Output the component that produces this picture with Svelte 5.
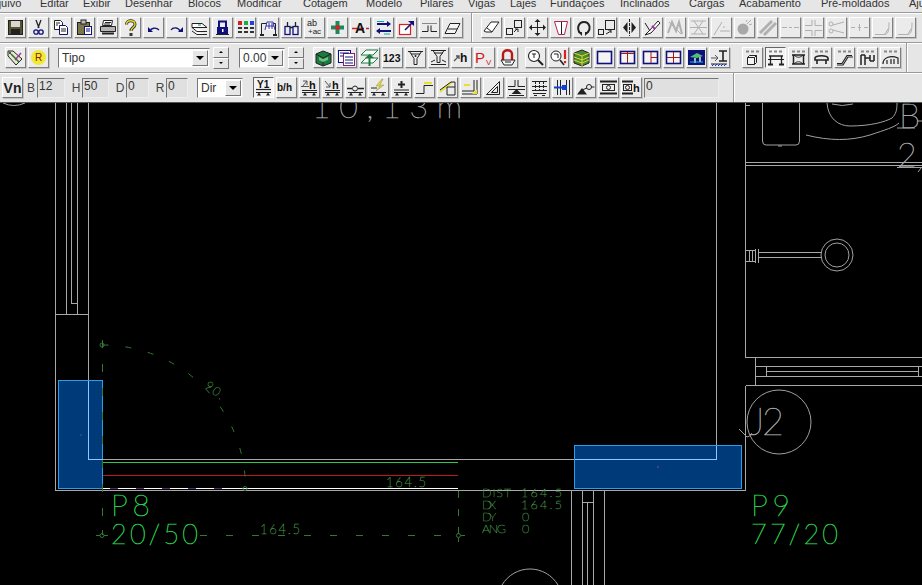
<script>
  const menu = [['Arquivo',56],['Editar',43],['Exibir',42],['Desenhar',63],['Blocos',49],['Modificar',66],['Cotagem',63],['Modelo',54],['Pilares',48],['Vigas',42],['Lajes',40],['Fundações',70],['Inclinados',69],['Cargas',50],['Acabamento',82],['Pré-moldados',88],['Ajuda',40]];
  const base = `<path d="M2 14.5h15" stroke="#222"/><path d="M3 17.5l2-3 2 3zM12 17.5l2-3 2 3z" fill="#222"/>`;
  const grey = '#b0b0b0';
  const t = (x, y, s, fs, c = '#111', w = 700) => `<text x="${x}" y="${y}" font-size="${fs}" font-weight="${w}" fill="${c}" font-family="Liberation Sans, sans-serif">${s}</text>`;
  const win = (inner) => `<rect x="2.500" y="3.500" width="14" height="12" fill="#f4f4f4" stroke="#10107a" stroke-width="1.600"/>${inner}`;
  const top3 = `<path d="M3 3.500h3M8 3.500h3M13 3.500h3" stroke="#888" stroke-width="2"/>`;
  const row1a = [
    `<rect x="2.500" y="2.500" width="14" height="14" fill="#55552f" stroke="#222"/><rect x="5" y="3" width="9" height="6" fill="#d8d8d0"/><rect x="5" y="11" width="9" height="5" fill="#222"/>`,
    `<path d="M7 2l3 8M12 2l-3 8" stroke="#222" stroke-width="1.300"/><circle cx="7" cy="14" r="2.200" fill="none" stroke="#10107a" stroke-width="1.300"/><circle cx="12" cy="14" r="2.200" fill="none" stroke="#10107a" stroke-width="1.300"/>`,
    `<path d="M2.500 2.500h6l2 2v7h-8z" fill="#fff" stroke="#222"/><path d="M7.500 7.500h6l2 2v7h-8z" fill="#fff" stroke="#10107a"/><path d="M4 5h4M4 7h2M9 11h5M9 13h5" stroke="#222"/>`,
    `<rect x="2.500" y="4.500" width="12" height="12" fill="#7d7648" stroke="#222"/><rect x="6" y="2" width="5" height="4" fill="#bbb" stroke="#222"/><rect x="9.500" y="8.500" width="7" height="8" fill="#fff" stroke="#10107a"/><path d="M11 11h4M11 13h4" stroke="#10107a"/>`,
    `<path d="M5.500 2.500h9l-1 5h-9z" fill="#fff" stroke="#222"/><path d="M2.500 8.500h15v5h-15z" fill="#b5b5b5" stroke="#222"/><path d="M4 15.500h12" stroke="#222" stroke-width="2"/><path d="M7 4.500h6M6 6h6" stroke="#222"/>`,
    `<path d="M5.500 6.500C5.500 1.500 14 1.500 14 6.500c0 3-4 3-4 6.500" fill="none" stroke="#333" stroke-width="3"/><path d="M5.500 6.500C5.500 1.500 14 1.500 14 6.500c0 3-4 3-4 6.500" fill="none" stroke="#e8d820" stroke-width="1.300"/><rect x="8.500" y="15" width="3" height="3" fill="#333"/>`,
    `<path d="M6 13c1-3 6-4 9-1" fill="none" stroke="#10107a" stroke-width="1.300"/><path d="M4 9v5h5z" fill="#10107a"/>`,
    `<path d="M4 12c2-3 7-3 9 1" fill="none" stroke="#10107a" stroke-width="1.300"/><path d="M16 9v5h-5z" fill="#10107a"/>`,
    `<path d="M2 5.500h10l5 4-5 0H2zM2 9.500l5 4h10M2 13l5 3.500h10" fill="#fff" stroke="#222"/><path d="M8 7h3" stroke="#088"/>`,
    `<rect x="4" y="9" width="11" height="7" fill="#10107a"/><rect x="6" y="3.500" width="7" height="7" fill="none" stroke="#10107a" stroke-width="2"/><rect x="9" y="11" width="1.500" height="3" fill="#fff"/><path d="M3 16.500h13" stroke="#222"/>`,
    `<g shape-rendering="crispEdges"><rect x="2" y="3" width="4" height="4" fill="#d82020"/><rect x="8" y="3" width="4" height="4" fill="#18b040"/><rect x="14" y="3" width="4" height="4" fill="#2040e0"/><rect x="2" y="9" width="4" height="2" fill="#333"/><rect x="8" y="9" width="4" height="2" fill="#333"/><rect x="14" y="9" width="4" height="2" fill="#333"/><rect x="2" y="13" width="4" height="2" fill="#333"/><rect x="8" y="13" width="4" height="2" fill="#333"/><rect x="14" y="13" width="4" height="2" fill="#333"/></g>`,
    `<path d="M2.500 17V5.500h14V17" fill="none" stroke="#222"/><path d="M6 12l2-8h6l2 8" fill="#fff" stroke="#3030a0"/><path d="M7 8h8M10 5v6M13 5v6" stroke="#3030a0"/><path d="M1 17h4M14 17h4" stroke="#222" stroke-width="2"/>`,
    `<rect x="3" y="8.500" width="5" height="8" fill="none" stroke="#10107a" stroke-width="1.300"/><rect x="11" y="8.500" width="5" height="8" fill="none" stroke="#10107a" stroke-width="1.300"/><path d="M5.500 4v5M13.500 4v5M8 9.500h3" stroke="#222" stroke-width="1.300"/>`,
    t(2, 8, 'ab', 9, '#222', 400) + t(3, 16, '+ac', 8, '#222', 400),
    `<path d="M9.500 3v13M3 9.500h13" stroke="#188a60" stroke-width="4"/><circle cx="9.500" cy="9.500" r="2.400" fill="#d82020"/>`,
    `<path d="M1 10.500h17" stroke="#d82020" stroke-dasharray="5 2" stroke-width="1.300"/>` + t(4, 15, 'A', 14),
    `<path d="M3 6h12" stroke="#10107a" stroke-width="2"/><path d="M13 3l4 3-4 3z" fill="#10107a"/><path d="M5 13h12" stroke="#10107a" stroke-width="2"/><path d="M6 10l-4 3 4 3z" fill="#10107a"/><path d="M3 3.500h7M10 16h6" stroke="#0aa"/>`,
    `<rect x="2.500" y="6.500" width="11" height="10" fill="#fff" stroke="#d82020" stroke-width="1.200"/><path d="M8 12l7-7" stroke="#10107a" stroke-width="1.600"/><path d="M11 3h6v5z" fill="#10107a"/>`,
    `<path d="M2 13.500h6v-6M11 7.500v6h6" fill="none" stroke="#222"/><path d="M2 5.500h15" stroke="#888"/>`,
    `<path d="M2 15.500l5-10h10l-5 10z" fill="#f4f4f4" stroke="#222"/><path d="M5 11h9" stroke="#222"/>`
  ];
  const row1b = [
    `<path d="M2 13l7-9h8l-7 10H4z" fill="#fff" stroke="#222"/><path d="M5 10l5 4" stroke="#222"/>`,
    `<rect x="1.500" y="10.500" width="6" height="6" fill="none" stroke="#222"/><rect x="9.500" y="2.500" width="7" height="7" fill="none" stroke="#222"/><path d="M9 14l3-3M10 11h3v3" stroke="#222" fill="none"/>`,
    `<path d="M9.500 2v15M2 9.500h15" stroke="#222"/><path d="M9.500 1l-3 3h6zM9.500 18l-3-3h6zM1 9.500l3-3v6zM18 9.500l-3-3v6z" fill="#222"/>`,
    `<path d="M3.500 3.500h13l-3 13h-6z" fill="#fff" stroke="#b82050"/><path d="M10.500 4v12" stroke="#222"/>`,
    `<path d="M6 15C2 10 5 4 10 4s8 6 3 11" fill="none" stroke="#222" stroke-width="2"/><path d="M4 14h4v4zM15 14h-4v4z" fill="#222"/>`,
    `<rect x="1.500" y="11.500" width="5" height="5" fill="none" stroke="#222"/><rect x="8.500" y="2.500" width="9" height="9" fill="none" stroke="#222"/><path d="M9 16l5-3M11 12h3v3" fill="none" stroke="#222"/>`,
    `<path d="M9.500 1v17" stroke="#222" stroke-dasharray="3 1"/><path d="M7.500 4v11L3 9.500zM11.500 4v11l4.500-5.500z" fill="#222"/>`,
    `<path d="M2 17l4-4 9-10 2 2-9 10z" fill="#fff" stroke="#222"/><path d="M9 8l3 3" stroke="#a030a0" stroke-width="2"/><path d="M2 5l5 8" stroke="#222"/>`
  ];
  const g = (s) => `<g fill="none" stroke="${grey}" stroke-width="1">${s}</g>`;
  const row1c = [
    g(`<path d="M2 15l4-11 4 9 3-9 3 12" stroke-width="2"/><path d="M3 4l12 12"/>`),
    g(`<path d="M2 3h15M2 16h15M5 3l9 13M14 3L5 16M1 9.500h17"/>`),
    g(`<path d="M2 17L10 4M8 13h10" /><path d="M11 9h2" stroke-dasharray="2 1"/>`),
    `<circle cx="8" cy="11" r="5.500" fill="#a8a8a8"/><path d="M12 6l4-4M14 7l3-1M11 4l1-2" stroke="${grey}"/>`,
    g(`<path d="M2 15L14 3M6 17L18 5" stroke-width="3"/>`),
    g(`<path d="M1 9.500h5M13 9.500h5M8 9.500h3"/>`),
    g(`<path d="M1 7.500h7V2M18 7.500h-7V2M1 12.500h7V18M18 12.500h-7V18"/>`),
    g(`<circle cx="4" cy="6" r="2"/><circle cx="4" cy="13" r="2"/><path d="M6 7l11-3M6 12l11 3"/>`),
    g(`<path d="M1 9.500h4M8 9.500h3M14 9.500h4M9.500 6v7"/>`),
    g(`<path d="M2 16.500h9c4 0 5-3 5-12M12 16l3-5"/>`),
    g(`<path d="M2 16.500h9c4 0 5-3 5-12M12 16l3-5"/>`)
  ];
  const row2a = [
    `<path d="M2 6l7-3 8 3v9l-8 3-7-3z" fill="#1a7a40" stroke="#222"/><path d="M2 6l7 4 8-4M9 10v8" stroke="#222" fill="none"/><path d="M5 9l4 2 5-2v3l-5 2-4-2z" fill="#70c080"/>`,
    `<rect x="1.500" y="2.500" width="12" height="12" fill="#fff" stroke="#10107a"/><rect x="6.500" y="5.500" width="11" height="12" fill="#fff" stroke="#802080"/><path d="M3 5h9M3 8h3M8 9h8M8 12h8M8 15h8" stroke="#10107a"/>`,
    `<path d="M1 7l5-5h12l-5 5zM1 15l5-5h12l-5 5z" fill="#fff" stroke="#1a7a40"/><path d="M9.500 18V8" stroke="#1a7a40" stroke-width="2"/><path d="M5 10l4.500-4 4.500 4z" fill="#1a7a40"/>`,
    t(0, 14, '123', 10.500),
    `<path d="M2 3.500h15M3.500 3.500l4.500 7v6h3v-6l4.500-7M5 6h9" fill="none" stroke="#222"/><circle cx="9.500" cy="8" r="1" fill="#222"/>`,
    `<path d="M2 2.500h15M4 2.500l4 6v6h3v-6l4-6M2 16.500h15M5 5h9" fill="none" stroke="#222"/><path d="M2 14l4-2M17 14l-4-2" stroke="#222"/>`,
    `<path d="M2 13l5-5M4 8h3v3" stroke="#555" stroke-width="1.300" fill="none"/>` + t(8, 14, 'h', 12),
    t(0, 15, 'P', 15, '#d01818', 400) + t(11, 17, 'V', 8, '#d01818', 400),
    `<path d="M5 12V6c0-5 9-5 9 0v6" fill="none" stroke="#b81818" stroke-width="2.400"/><path d="M3 12h14l-3 5H6z" fill="#f4f4f4" stroke="#222"/><path d="M7 14h6" stroke="#222"/>`
  ];
  const row2b = [
    `<circle cx="8" cy="8" r="5.500" fill="#fff" stroke="#222" stroke-width="1.100"/><path d="M12 12l5 5" stroke="#222" stroke-width="2"/><path d="M6 6h4M8 6v4" stroke="#222"/>`,
    `<circle cx="7" cy="8" r="5" fill="#fff" stroke="#222"/><path d="M11 12l4 5" stroke="#222" stroke-width="1.600"/><path d="M5 6h4v4" stroke="#222" fill="none"/><path d="M16 2v9" stroke="#d82020" stroke-width="2.200"/><rect x="14.900" y="13" width="2.200" height="2.200" fill="#d82020"/>`,
    `<path d="M2 5l8-3 7 3v10l-7 3-8-3z" fill="#4a8a30" stroke="#222"/><path d="M2 5l8 3 7-3M10 8v10M2 9l8 3 7-3M2 12l8 3 7-3" stroke="#e0d830" fill="none"/>`,
    win(''),
    win(`<path d="M9.500 4v11M3 5.500h13" stroke="#a81818"/>`),
    win(`<path d="M10 4v11M10 9.500h6" stroke="#a81818"/>`),
    win(`<path d="M9.500 4v11M3 9.500h13" stroke="#a81818"/>`),
    `<rect x="2" y="3" width="15" height="13" fill="#10107a" stroke="#10107a" stroke-width="2"/><path d="M3 9l7-4 6 3-6 2z" fill="#50c070"/><path d="M8 10v5M13 9v5" stroke="#fff" stroke-width="1.300"/><path d="M3 14h13" stroke="#0cc"/>`,
    `<path d="M9 3h8M9 13h8M13 3v10" stroke="#222" stroke-width="1.600"/><path d="M1 10h7M5 7l3 3-3 3" stroke="#555" fill="none"/><path d="M1 16h16" stroke="#222"/><path d="M2 18l2-2M5 18l2-2M8 18l2-2M11 18l2-2M14 18l2-2" stroke="#1030c0"/>`
  ];
  const row2c = [
    top3 + `<path d="M6.500 7.500h7l-2 2h-7zM4.500 9.500v7h7v-7M11.500 16.500l2-2v-7" fill="#f4f4f4" stroke="#222"/>`,
    top3 + `<path d="M3 8h14M4.500 8v8M15.500 8v8" stroke="#222" stroke-width="1.300"/><path d="M2 11.500h16" stroke="#222"/><path d="M2 16.500h5M13 16.500h5" stroke="#222" stroke-width="2"/>`,
    top3 + `<path d="M3 7h13M3 16h13M4.500 7v9M14.500 7v9" stroke="#222" stroke-width="1.500" fill="none"/><path d="M5 7c3 3 6 3 9 0M5 16c3-3 6-3 9 0" fill="none" stroke="#222"/>`,
    top3 + `<path d="M3 10c1-3 12-3 13 0v2H3zM5 12v4M14 12v4" stroke="#222" stroke-width="1.600" fill="none"/>`,
    top3 + `<path d="M2 15.500h5l5-8h5M2 17h6l5-8h5" fill="none" stroke="#222" stroke-width="1.200"/>`,
    top3 + `<path d="M3 7v10M7 7v10M12 7v6M16 7v6M3 7h4M12 13h4M7 10h5" stroke="#222" stroke-width="1.500" fill="none"/>`,
    top3 + `<path d="M2 16c0-7 8-9 15-6v6M6 16v-4M10 16v-5M13 16v-5" fill="none" stroke="#222" stroke-width="1.200"/>`
  ];
  const row3 = [
    t(3, 10, 'Y1', 10) + `<path d="M2 11.500h15" stroke="#222" stroke-width="1.200"/>` + base,
    t(0, 13, 'b/h', 10),
    `<path d="M2 9l5-6M3 3h4v4" stroke="#555" fill="none"/>` + t(9, 11, 'h', 11) + `<path d="M1 8.500h8" stroke="#555"/><path d="M2 12.500h15" stroke="#222"/>` + base,
    `<path d="M2 3l5 6M3 9h4V5" stroke="#555" fill="none"/>` + t(9, 11, 'h', 11) + `<path d="M2 12.500h15" stroke="#222"/>` + base,
    `<path d="M1 10.500h5M12 10.500h6" stroke="#222" stroke-width="1.300"/><circle cx="9" cy="10.500" r="2.500" fill="none" stroke="#222"/>` + base,
    `<path d="M13 1L7 8h4l-4 5 8-6h-4l3-6z" fill="#e8d820" stroke="#888" stroke-width=".5"/><path d="M2 10h6" stroke="#222"/>` + base,
    `<path d="M9.500 3v7M6 6.500h7" stroke="#222" stroke-width="2"/><path d="M2 12h15" stroke="#222"/>` + base,
    `<path d="M1 15.500h8v-8h9" fill="none" stroke="#222"/><path d="M9 5h8" stroke="#e8e030" stroke-width="2"/>`,
    `<path d="M2 14L14 4" stroke="#e8e030" stroke-width="2"/><path d="M2 12L13 4h4v13H9V9" fill="none" stroke="#222"/><path d="M9 9h8" stroke="#222"/>`,
    `<path d="M13 2v11H1M16 2v14H1" stroke="#222" fill="none"/><path d="M11 16h5v-5z" fill="#e8e030"/><path d="M3 7h6" stroke="#e8e030" stroke-width="2"/>`,
    `<path d="M2.500 16.500L15.500 3.500v13zM7.500 14.500l6-6v6z" fill="#ebebeb" stroke="#222" stroke-width="1"/>`,
    `<path d="M1 8.500h7V2M18 8.500h-7V2M1 11.500h17" fill="none" stroke="#222"/><path d="M9.500 11l-5 5h10z" fill="#222"/><path d="M2 17.500h15" stroke="#222"/>`,
    `<path d="M2 3.500h15M2 8.500h15M2 12.500h15M5.500 3v10M9.500 3v10M13.500 3v10" fill="none" stroke="#222" stroke-dasharray="3 1"/><path d="M3 15.500h13M4 17.500h3M12 17.500h3" stroke="#222"/>`,
    `<path d="M4.500 2v15M7.500 2v15M13.500 2v15M16.500 2v15" stroke="#222"/><path d="M1 9.500h12" stroke="#1040d0" stroke-width="2"/><rect x="9" y="7" width="5" height="5" fill="#1040d0"/>`,
    `<path d="M1 16.500h10L6 10z" fill="#222"/><circle cx="13" cy="9" r="2.500" fill="none" stroke="#222"/><path d="M6 12l5-2M15.500 9h3" stroke="#222"/>`,
    `<path d="M1 3.500h17M1 15.500h17" stroke="#222" stroke-width="2"/><rect x="3.500" y="6.500" width="12" height="6" fill="none" stroke="#222"/><circle cx="9.500" cy="9.500" r="2" fill="none" stroke="#222"/>`,
    `<path d="M0 3.500h11M0 15.500h11" stroke="#222" stroke-width="2"/><rect x="1.500" y="6.500" width="8" height="6" fill="none" stroke="#222"/><circle cx="5.500" cy="9.500" r="2" fill="none" stroke="#222"/>` + t(11, 14, 'h', 11)
  ];
  const first2 = [
    `<path d="M2 3l5 0 9 8-6 6-8-9z" fill="#e8e8c8" stroke="#222"/><path d="M5 6l8 8" stroke="#1a7a40" stroke-width="1.600"/><path d="M9 12l6-7" stroke="#a030a0" stroke-width="1.300"/><circle cx="4" cy="5" r="1" fill="#222"/>`,
    `<circle cx="9.500" cy="9.500" r="7.500" fill="#f0ea30"/>` + t(6, 13, 'R', 10, '#8a2020', 400)
  ];
  const inputs = [['B','12',28],['H','50',27],['D','0',23],['R','0',22]];
</script>

{#snippet btn(ic, cls = '')}
  <div class="btn {cls}"><svg width="19" height="19" viewBox="0 0 19 19">{@html ic}</svg></div>
{/snippet}
{#snippet spin()}
  <div class="spin"><span class="sp"><i class="up"></i></span><span class="sp"><i class="dn"></i></span></div>
{/snippet}
{#snippet combo(text, cls)}
  <div class="combo {cls}"><span class="ctext">{text}</span><span class="carrow"><i class="dn big"></i></span></div>
{/snippet}

<div class="app">
  <div class="menubar">
    {#each menu as [m, w]}<span class="mi" style="width:{w}px">{m}</span>{/each}
  </div>
  <div class="row r1">
    <div class="grp">{#each row1a as ic}{@render btn(ic)}{/each}</div>
    <div class="sep s1"></div>
    <div class="grp">{#each row1b as ic}{@render btn(ic)}{/each}{#each row1c as ic}{@render btn(ic)}{/each}</div>
  </div>
  <div class="row r2">
    <div class="grp">{#each first2 as ic}{@render btn(ic)}{/each}</div>
    {@render combo('Tipo', 'c-tipo')}
    {@render spin()}
    {@render combo('0.00', 'c-num')}
    {@render spin()}
    <div class="grp g2a">{#each row2a as ic}{@render btn(ic)}{/each}</div>
    <div class="grp g2b">{#each row2b as ic}{@render btn(ic)}{/each}</div>
    <div class="grp g2c">{#each row2c as ic, i}{@render btn(ic, i === 1 ? 'on' : '')}{/each}</div>
    <div class="sep s2"></div>
  </div>
  <div class="row r3">
    <div class="btn vn"><b>Vn</b></div>
    {#each inputs as [l, v, w]}
      <span class="lbl">{l}</span><div class="field" style="width:{w}px">{v}</div>
    {/each}
    {@render combo('Dir', 'c-dir')}
    <div class="grp g3">{#each row3 as ic, i}{@render btn(ic, i === 0 ? 'on' : '')}{/each}</div>
    <div class="field f-long">0</div>
    <div class="sep s3"></div>
  </div>

  <svg class="cad" width="922" height="482" viewBox="0 103 922 482">
    <g class="wall">
      <path d="M55.500 103V491M56 490.500H745.500V385.500M66.500 103V314M71.500 103V303.500M77.500 103V314M88.500 103V459.500H716.500V103M55.500 314.500H88.500M71.500 303.500H77.500" />
      <path d="M745.500 103V357.500H922M745.500 162.500H922M745.500 165.500H922M745.500 385.500H922M755.500 357.500V385.500M755.500 366.500H922M766.500 371.500H918M755.500 376.500H922M766.500 366.500V376.500M918.500 366.500V376.500M745.500 105.500H749.500" />
      <path d="M571.500 491V585M582.500 491V585M587.500 502V585M593.500 491V585M604.500 491V585M582.500 502.500H593.500" />
      <path d="M745.500 250.500H755.500M745.500 261.500H755.500M749.500 250V262M752.500 250V262M755.500 249V263M758 249V263M758 252.500H822M758 257.500H822" />
    </g>
    <g class="thin">
      <circle cx="837" cy="255" r="16"/><circle cx="837" cy="255" r="12"/>
      <circle cx="779" cy="422" r="32"/>
      <path d="M762.500 103V141Q762.500 145 766 145H796Q799.500 145 799.500 141V103M778 146H782"/>
      <path d="M827 103C828 118 838 126 850 126C870 126 885 122 892 118C896 114 897 110 897 103"/>
      <path d="M806 135C830 141 850 141 870 135C885 130 895 127 899 123"/>
      <path d="M832 104Q842 107 853 104"/>
      <path d="M739 429L747 437Q750 437 752 433"/>
      <path d="M3 103Q14 108 25 103"/>
      <path d="M897 128H915M897 167.500H922M918 172L921 168M917 121H922"/>
      <path d="M502 585A32.500 32.500 0 0 1 558 585"/>
    </g>
    <text class="tg grey big-g" x="312" y="118" textLength="150" lengthAdjust="spacing">10,13m</text>
    <text class="tg grey j2" x="749" y="435" textLength="35" lengthAdjust="spacing">J2</text>
    <text class="tg grey bb" x="899" y="128">B</text>
    <text class="tg grey bb" x="897" y="167">2</text>

    <g class="col">
      <rect x="58.500" y="380.500" width="44" height="108"/>
      <rect x="574.500" y="445.500" width="167" height="43"/>
    </g>
    <path class="over" d="M88.500 380.500V459.500H102.500M574.500 459.500H716.500V445.500"/>
    <circle cx="81" cy="435" r=".7" fill="#3a70c0"/><circle cx="658" cy="467" r=".7" fill="#a050c0"/>

    <path class="ln" stroke="#2cc84a" d="M103 462.500H458"/>
    <path class="ln" stroke="#c01818" d="M103 475.500H458"/>
    <path class="ln" stroke="#fff" d="M103 488.500H458"/>
    <path class="ln" stroke="#5a2a70" stroke-dasharray="8 18" d="M110 488.500H230"/>

    <g class="dash">
      <path d="M102.500 340V535" stroke-dasharray="8 16"/>
      <path d="M102.500 345A143 143 0 0 1 245.500 488" stroke-dasharray="6 17"/>
      <path d="M200 535.500H458" stroke-dasharray="7 19"/>
      <path d="M458.500 491V535" stroke-dasharray="7 11"/>
      <circle cx="102" cy="345" r="2"/><circle cx="245" cy="488.500" r="2"/><circle cx="102" cy="535.500" r="2"/><circle cx="458.500" cy="535.500" r="2"/>
      <path d="M96 535.500H100M104 535.500H108M102.500 530V533M461 535.500H465M458.500 538V542"/>
    </g>
    <text class="tg dim" font-size="12" x="204" y="387" transform="rotate(38 204 387)" textLength="21" lengthAdjust="spacing">90.</text>
    <text class="tg dim" font-size="13" x="386" y="487" textLength="40" lengthAdjust="spacing">164.5</text>
    <text class="tg dim" font-size="13" x="260" y="534" textLength="40" lengthAdjust="spacing">164.5</text>
    <g class="tg dim info">
      <text x="482" y="497" textLength="29" lengthAdjust="spacing">DIST</text><text x="521" y="497" textLength="41" lengthAdjust="spacing">164.5</text>
      <text x="482" y="509" textLength="14" lengthAdjust="spacing">DX</text><text x="521" y="509" textLength="41" lengthAdjust="spacing">164.5</text>
      <text x="482" y="521" textLength="14" lengthAdjust="spacing">DY</text><text x="522" y="521">0</text>
      <text x="482" y="533" textLength="24" lengthAdjust="spacing">ANG</text><text x="522" y="533">0</text>
    </g>
    <g class="tg lbl-g">
      <text x="111" y="516" font-size="30" textLength="39" lengthAdjust="spacing">P8</text>
      <text x="111" y="544" font-size="27" textLength="87" lengthAdjust="spacing">20/50</text>
      <text x="751" y="516" font-size="30" textLength="39" lengthAdjust="spacing">P9</text>
      <text x="751" y="544" font-size="27" textLength="87" lengthAdjust="spacing">77/20</text>
    </g>
  </svg>
</div>

<style>
  :global(body) { margin: 0; background: #000; overflow: hidden; }
  .app { width: 922px; height: 585px; overflow: hidden; background: #000; font-family: "Liberation Sans", Arial, sans-serif; }
  .menubar { height: 12px; background: #e6e6e6; display: flex; overflow: hidden; margin-left: -16px; white-space: nowrap; font-size: 11px; line-height: 6px; color: #333; width: 960px; }
  .mi { display: block; flex: none; }
  .row { height: 29px; background: #e6e6e6; display: flex; align-items: center; border-top: 1px solid #9a9a9a; box-shadow: inset 0 1px 0 #fff; position: relative; }
  .r1, .r2 { padding-left: 5px; }
  .r3 { padding-left: 2px; border-bottom: 1px solid #555; }
  .grp { display: flex; gap: 2px; flex: none; }
  .btn { width: 21px; height: 21px; flex: none; box-sizing: border-box; display: flex; align-items: center; justify-content: center; background: #ebebeb; border: 1px solid; border-color: #fff #808080 #808080 #fff; box-shadow: 1px 1px 0 #c4c4c4; overflow: hidden; }
  .btn svg { display: block; flex: none; }
  .btn.on { border-color: #666 #fff #fff #666; background: #f4f4f4; box-shadow: none; }
  .vn { font-size: 14px; color: #222; }
  .sep { width: 1px; align-self: stretch; background: #999; border-right: 1px solid #fff; flex: none; }
  .s1 { margin: 0 8px; }
  .s2 { margin-left: 5px; }
  .s3 { margin-left: 14px; }
  .combo { height: 20px; box-sizing: border-box; flex: none; display: flex; align-items: center; background: #fff; border: 1px solid; border-color: #777 #eee #eee #777; font-size: 12px; color: #333; padding-left: 3px; }
  .ctext { flex: 1; }
  .carrow { width: 16px; height: 16px; background: #e6e6e6; border: 1px solid; border-color: #fff #777 #777 #fff; box-sizing: border-box; display: flex; align-items: center; justify-content: center; margin-right: 1px; }
  .c-tipo { width: 152px; margin-left: 9px; }
  .c-num { width: 46px; margin-left: 10px; }
  .c-dir { width: 46px; margin-left: 6px; }
  .spin { width: 16px; height: 22px; margin-left: 3px; display: flex; flex-direction: column; flex: none; }
  .sp { height: 11px; box-sizing: border-box; border: 1px solid; border-color: #fff #777 #777 #fff; display: flex; align-items: center; justify-content: center; background: #e6e6e6; }
  i { display: block; width: 0; height: 0; }
  .up { border-left: 2px solid transparent; border-right: 2px solid transparent; border-bottom: 2px solid #000; }
  .dn { border-left: 2px solid transparent; border-right: 2px solid transparent; border-top: 2px solid #000; }
  .dn.big { border-left-width: 4px; border-right-width: 4px; border-top-width: 4px; }
  .g2a { margin-left: 9px; }
  .g2b { margin-left: 7px; }
  .g2c { margin-left: 12px; }
  .lbl { font-size: 12px; color: #444; flex: none; width: 10px; text-align: center; margin-left: 3px; }
  .field { height: 20px; box-sizing: border-box; flex: none; background: #e0e0e0; border: 1px solid; border-color: #777 #eee #eee #777; font-size: 12px; color: #333; padding-left: 1px; line-height: 15px; margin-right: 3px; margin-left: 1px; }
  .g3 { margin-left: 10px; }
  .f-long { width: 75px; margin-left: 2px; margin-right: 0; }
  .cad { display: block; background: #000; }
  .wall path { fill: none; stroke: #a8a8a8; stroke-width: 1; shape-rendering: crispEdges; }
  .thin * { fill: none; stroke: #a0a0a0; stroke-width: 1; }
  .col rect { fill: #003a78; stroke: #2a9ee8; stroke-width: 1; shape-rendering: crispEdges; }
  .over { fill: none; stroke: #8cc8ff; stroke-width: 1; shape-rendering: crispEdges; }
  .ln { fill: none; stroke-width: 1; shape-rendering: crispEdges; }
  .dash * { fill: none; stroke: #2f7a2f; stroke-width: 1; }
  .tg { font-family: Lato, Roboto, sans-serif; font-weight: 100; stroke-width: .5; opacity: .99; }
  .grey { fill: #a8a8a8; stroke: #a8a8a8; }
  .big-g { font-size: 32px; }
  .j2 { font-size: 38px; }
  .bb { font-size: 34px; }
  .dim { fill: #459a45; stroke: #459a45; stroke-width: .4; }
  .info { font-size: 12.5px; }
  .lbl-g { fill: #28d04a; stroke: #28d04a; stroke-width: .6; }
</style>
